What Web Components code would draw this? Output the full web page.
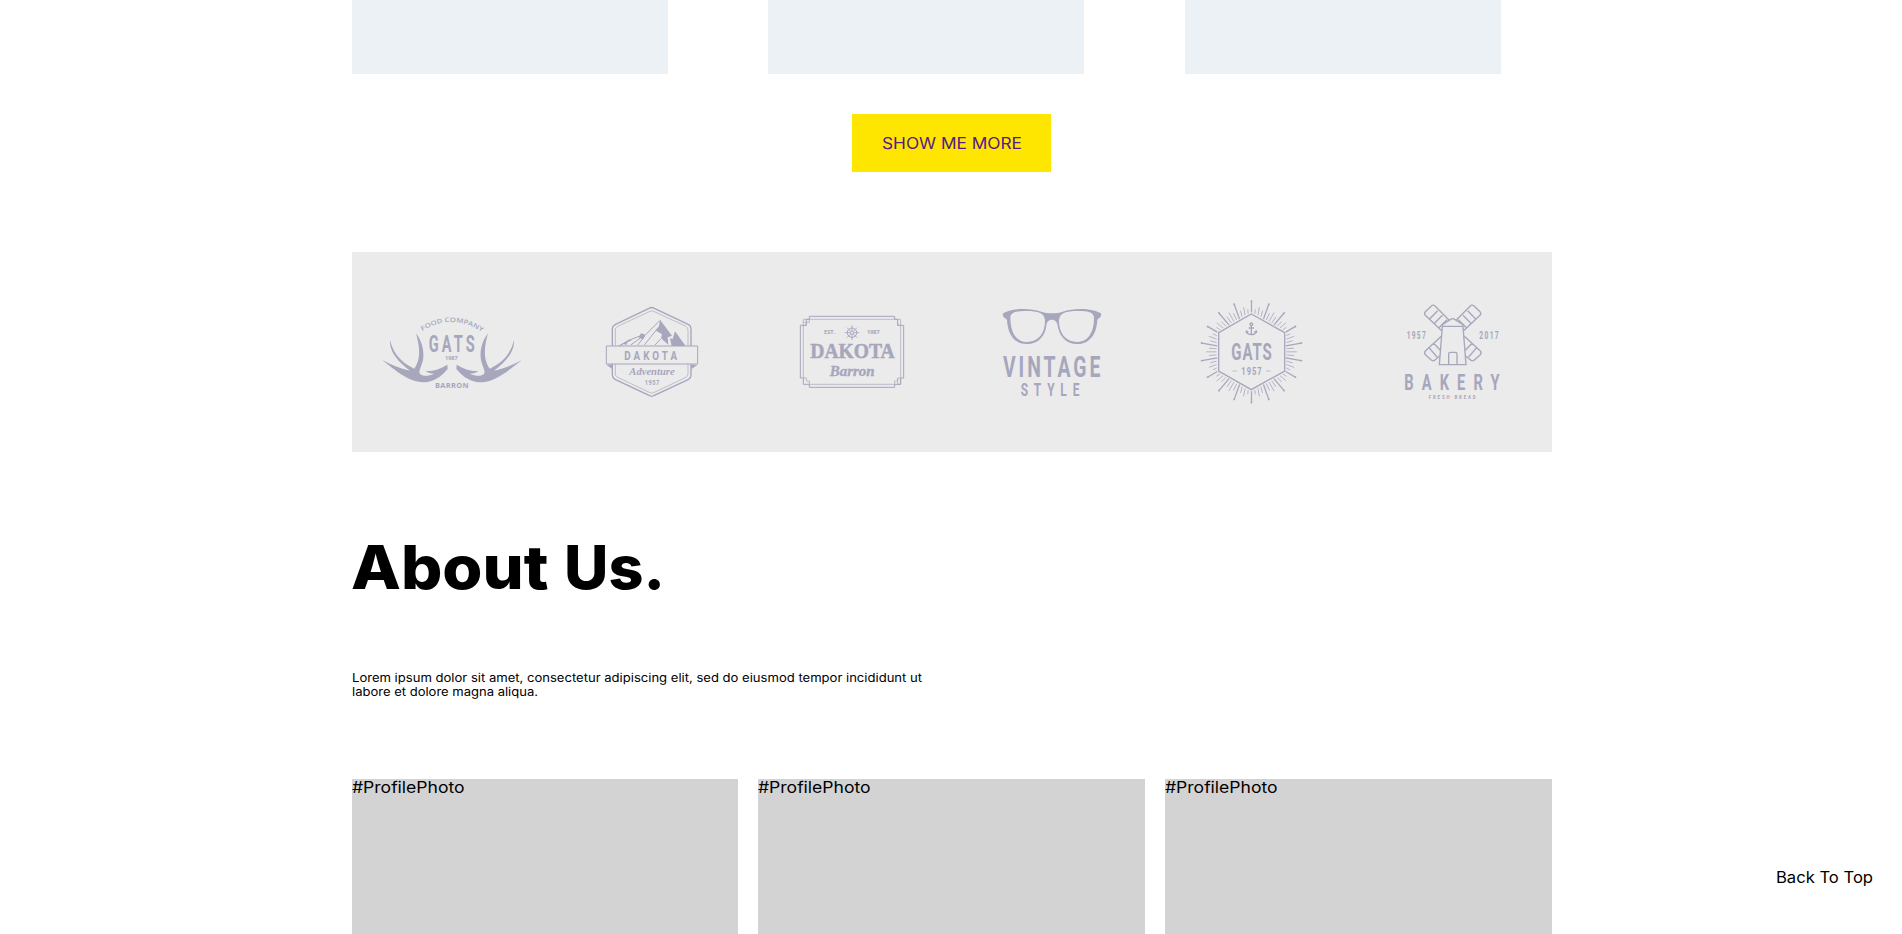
<!DOCTYPE html>
<html lang="en"><head><meta charset="utf-8"><title>About Us</title>
<style>
html,body{margin:0;height:934px;overflow:hidden;background:#fff}
body{font-family:Inter,"Open Sans",sans-serif;font-size:15.4px;color:#000}
</style></head><body>
<landing-page></landing-page>
<script>
class FitText extends HTMLElement{
  connectedCallback(){
    const r=this.attachShadow({mode:'open'});
    r.innerHTML=`<style>:host{display:block;white-space:nowrap;width:${this.getAttribute('width')}px}span{display:inline-block;transform-origin:0 50%}</style><span><slot></slot></span>`;
    const s=r.querySelector('span');
    const w=s.getBoundingClientRect().width;
    if(w)s.style.transform=`scaleX(${+this.getAttribute('width')/w})`;
  }
}
class WorkCards extends HTMLElement{
  connectedCallback(){
    this.attachShadow({mode:'open'}).innerHTML=`<style>:host{display:grid;grid-template-columns:repeat(3,316px);column-gap:100.5px;height:74px}div{background:#ebf1f5}</style><div></div><div></div><div></div>`;
  }
}
class ShowMore extends HTMLElement{
  connectedCallback(){
    this.attachShadow({mode:'open'}).innerHTML=`<style>:host{display:block;margin:40px auto 0;width:199px;box-sizing:border-box;height:58px;padding:20px 0 0 30px;background:#ffe600;color:#551a8b;line-height:20px}</style><slot></slot>`;
  }
}
class LogoMark extends HTMLElement{
  connectedCallback(){
    const marks={
antlers:[18,48,`
<path id="arc" d="M157 93Q243 39 331 93" fill="none"/>
<text font-family="Open Sans" font-weight="600" font-size="19"><textPath href="#arc" textLength="190" lengthAdjust="spacingAndGlyphs">FOOD COMPANY</textPath></text>
<text class="c" x="176" y="155" font-size="70" data-w="138" style="letter-spacing:15px">GATS</text>
<text class="m" x="225" y="181" font-size="13" data-w="38">1987</text>
<text class="m" x="195" y="264" font-size="21" data-w="101" style="letter-spacing:1px">BARRON</text>
<g id="h"><path d="M36 180C62 194 90 206 120 212C86 187 57 155 60 120C68 153 86 184 133 206C153 179 150 142 138 100C154 121 162 146 160 172C159 190 149 204 148 218C154 230 174 230 192 221C183 221 172 218 167 213C187 214 207 209 232 194L233 207C218 224 203 240 170 247C115 249 80 212 36 180Z"/></g>
<use href="#h" transform="translate(492 0) scale(-1 1)"/>`],
adventure:[38,43,`
<path class="s" stroke-width="4" d="M67 153V101Q67 94 75 89L177 40Q185 35 193 40L296 89Q303 94 303 101V153M67 207V240Q67 248 75 253L177 301Q185 307 193 301L296 253Q303 248 303 240V207"/>
<path class="s" stroke-width="2" d="M76 153V105Q76 98 83 94L180 49Q185 46 191 49L288 94Q294 98 294 105V153M76 207V237Q76 244 83 247L180 293Q185 296 191 293L288 247Q294 244 294 237V207"/>
<path class="s" stroke-width="3" d="M49 153H323V207H49Z"/>
<path d="M49 209H68V223ZM303 209H323L303 223Z"/>
<path d="M210 74L246 122L233 127L235 149L213 130L216 118L196 106L207 94ZM255 109L287 153H245L240 130L248 132ZM153 115L166 119L158 134L146 127ZM84 153L116 134L126 136L112 142L110 150L101 147L92 153Z"/>
<path class="s" stroke-width="3" d="M210 76L165 121M198 106L163 150M116 136L150 123M122 150L150 130M164 124L143 150M212 132L195 150"/>
<text class="c" x="103" y="195" font-size="39" data-w="158" style="letter-spacing:12px">DAKOTA</text>
<text x="118" y="239" font-family="Liberation Serif" font-style="italic" font-weight="700" font-size="30" data-w="136">Adventure</text>
<text class="c" x="164" y="269" font-size="21" data-w="44" style="letter-spacing:2px">1957</text>`],
barron:[38,53,`
<path class="s" stroke-width="3" d="M58 34H314V43H323V61H341V219H332V238H314V247H58V238H40V219H31V61H49V43H58Z"/>
<path class="s" stroke-width="2" d="M40 43H332V61H323V52H323M40 43V61H49V52H58V43M49 52H40M332 61V219H323V238H332V219M40 61V219H49V228H58V238H314V228H323V219"/>
<g class="s" stroke-width="3"><circle cx="186" cy="83" r="14"/><circle cx="186" cy="83" r="5"/><path stroke-width="2.5" d="M186 61V78M186 88V105M164 83H181M191 83H208M171 68L182 79M190 87L201 98M201 68L190 79M182 87L171 98"/></g>
<text class="m" x="102" y="88" font-size="14" data-w="34">EST.</text><text class="m" x="231" y="88" font-size="14" data-w="38">1987</text>
<text x="61" y="159" font-family="Liberation Serif" font-weight="700" font-size="63" stroke="#a6a6bd" stroke-width="1.5" data-w="253">DAKOTA</text>
<text x="119" y="213" font-family="Liberation Serif" font-style="italic" font-weight="700" font-size="44" stroke="#a6a6bd" data-w="135">Barron</text>`],
vintage:[38,43,`
<path fill-rule="evenodd" d="M38 56C61 40 116 37 154 50C174 56 198 56 218 50C256 37 311 40 334 56L332 65L322 74C320 119 298 147 262 147C225 147 207 119 203 92C201 68 170 68 169 92C166 119 148 147 110 147C74 147 53 119 51 74L40 65ZM61 69C62 115 80 141 110 141C145 141 165 115 165 78C165 54 144 48 109 48C73 48 61 53 61 69ZM207 78C207 115 228 141 262 141C292 141 312 115 312 69C312 53 299 48 263 48C228 48 207 54 207 78Z"/>
<text class="c" x="39" y="247" font-size="86" data-w="292" style="letter-spacing:13px">VINTAGE</text>
<text class="c" x="92" y="303" font-size="53" data-w="176" style="letter-spacing:26px">STYLE</text>`],
rays:[38,38,`
<path class="s" stroke-width="4" d="M184 72L284 128V243L184 299L86 243V128Z"/>${rays()}
<g class="s" stroke-width="4"><circle cx="184" cy="103" r="4"/><path d="M184 108V133M176 114H192M169 124C171 130 177 134 184 134C191 134 197 130 200 124"/></g><path d="M166 129L169 120L177 126ZM202 129L200 120L191 126Z"/>
<text class="c" x="124" y="209" font-size="71" data-w="121" style="letter-spacing:4px">GATS</text>
<path class="s" stroke-width="2" d="M127 243H141M228 243H242"/>
<text class="c" x="154" y="255" font-size="30" data-w="61" style="letter-spacing:4px">1957</text>`],
bakery:[38,38,`
<g class="s" stroke-width="4"><g id="sail"><path d="M155 122L106 76Q101 71 106 65L124 48Q130 43 135 48L177 90M118 88L143 62M132 101L157 76M146 114L171 89"/></g><use href="#sail" transform="translate(376 0) scale(-1 1)"/>
<path d="M154 139L106 183Q101 189 106 194L124 210Q130 215 135 210L149 198M117 173L141 201M131 160L151 181M223 139L271 183Q276 189 271 194L253 210Q247 215 242 210L227 198M260 173L236 201M246 160L226 181"/>
<path d="M157 109H219L228 224H148ZM157 109V104L182 88Q188 84 194 88L219 104V109M176 224V192Q176 187 181 187H196Q201 187 201 192V224"/></g>
<text class="c" x="50" y="147" font-size="30" data-w="57" style="letter-spacing:6px">1957</text><text class="c" x="268" y="147" font-size="30" data-w="58" style="letter-spacing:6px">2017</text>
<text class="c" x="43" y="299" font-size="65" data-w="286" style="letter-spacing:36px">BAKERY</text>
<text class="c" x="116" y="327" font-size="16" data-w="141" style="letter-spacing:7px">FRESH BREAD</text>`]};
    function rays(){
      let o='';
      for(let a=0;a<360;a+=5){
        const t=a*Math.PI/180,long=a%20===0;
        const hex=99/Math.cos(((a%60)-30)*Math.PI/180);
        const end=long?151:(a%20===10?136:128),st=hex+(long?4:6);
        const p=r=>`${(184.5+r*Math.sin(t)).toFixed(1)} ${(185.5-r*Math.cos(t)).toFixed(1)}`;
        o+=`<path class="s" stroke-width="${long?3.8:2.4}" d="M${p(st)}L${p(end)}"/>`;
        if(long){const q=p(152).split(' ');o+=`<circle cx="${q[0]}" cy="${q[1]}" r="2.8"/>`}
      }
      return o;
    }
    const [x,y,m]=marks[this.getAttribute('name')];
    this.attachShadow({mode:'open'}).innerHTML=`<style>:host,svg{display:block;width:200px;height:200px}svg{fill:#a6a6bd}.s{fill:none;stroke:#a6a6bd}.c{font-family:Roboto;font-weight:700}.m{font-family:"Open Sans";font-weight:700}</style><svg viewBox="0 0 200 200"><g transform="translate(${x} ${y}) scale(.33333)">${m}</g></svg>`;
    // data-w is the visible width; the last letter's trailing spacing comes on top
    this.shadowRoot.querySelectorAll('text[data-w]').forEach(t=>{
      const n=t.getComputedTextLength(),ls=parseFloat(t.style.letterSpacing)||0;
      t.setAttribute('textLength',n?t.dataset.w*n/(n-ls):t.dataset.w);
      t.setAttribute('lengthAdjust','spacingAndGlyphs');
    });
  }
}
class ClientBand extends HTMLElement{
  connectedCallback(){
    this.attachShadow({mode:'open'}).innerHTML=`<style>:host{display:grid;grid-template-columns:repeat(6,200px);height:200px;margin-top:80px;background:#ebebeb}</style>`+['antlers','adventure','barron','vintage','rays','bakery'].map(n=>`<logo-mark name="${n}"></logo-mark>`).join('');
  }
}
class ProfileCard extends HTMLElement{
  connectedCallback(){
    this.attachShadow({mode:'open'}).innerHTML=`<style>:host{display:block;height:155px;background:#d3d3d3;line-height:17px}</style><fit-text width="112.5">#ProfilePhoto</fit-text>`;
  }
}
class LandingPage extends HTMLElement{
  connectedCallback(){
    this.attachShadow({mode:'open'}).innerHTML=`<style>
:host{display:block;height:934px}
main{width:1200.2px;margin-left:351.5px}
h1{display:flex;gap:16px;margin:76px 0 0 -1px;font-size:60.5px;line-height:78px;font-weight:800}
p{margin:65px 0 0;font-size:11.4px;line-height:14px}
.team{display:grid;grid-template-columns:repeat(3,1fr);gap:20px;margin-top:80px}
.top{position:absolute;left:1775.5px;top:868px;line-height:20px}
</style><main><work-cards></work-cards><show-more><fit-text width="140">SHOW ME MORE</fit-text></show-more>
<client-band></client-band>
<h1><fit-text width="197.5">About</fit-text> <fit-text width="101">Us.</fit-text></h1>
<p><fit-text width="570">Lorem ipsum dolor sit amet, consectetur adipiscing elit, sed do eiusmod tempor incididunt ut</fit-text><fit-text width="186">labore et dolore magna aliqua.</fit-text></p>
<section class="team"><profile-card></profile-card><profile-card></profile-card><profile-card></profile-card></section></main>
<fit-text class="top" width="97">Back To Top</fit-text>`;
  }
}
customElements.define('fit-text',FitText);
customElements.define('work-cards',WorkCards);
customElements.define('show-more',ShowMore);
customElements.define('logo-mark',LogoMark);
customElements.define('client-band',ClientBand);
customElements.define('profile-card',ProfileCard);
customElements.define('landing-page',LandingPage);
</script></body></html>
